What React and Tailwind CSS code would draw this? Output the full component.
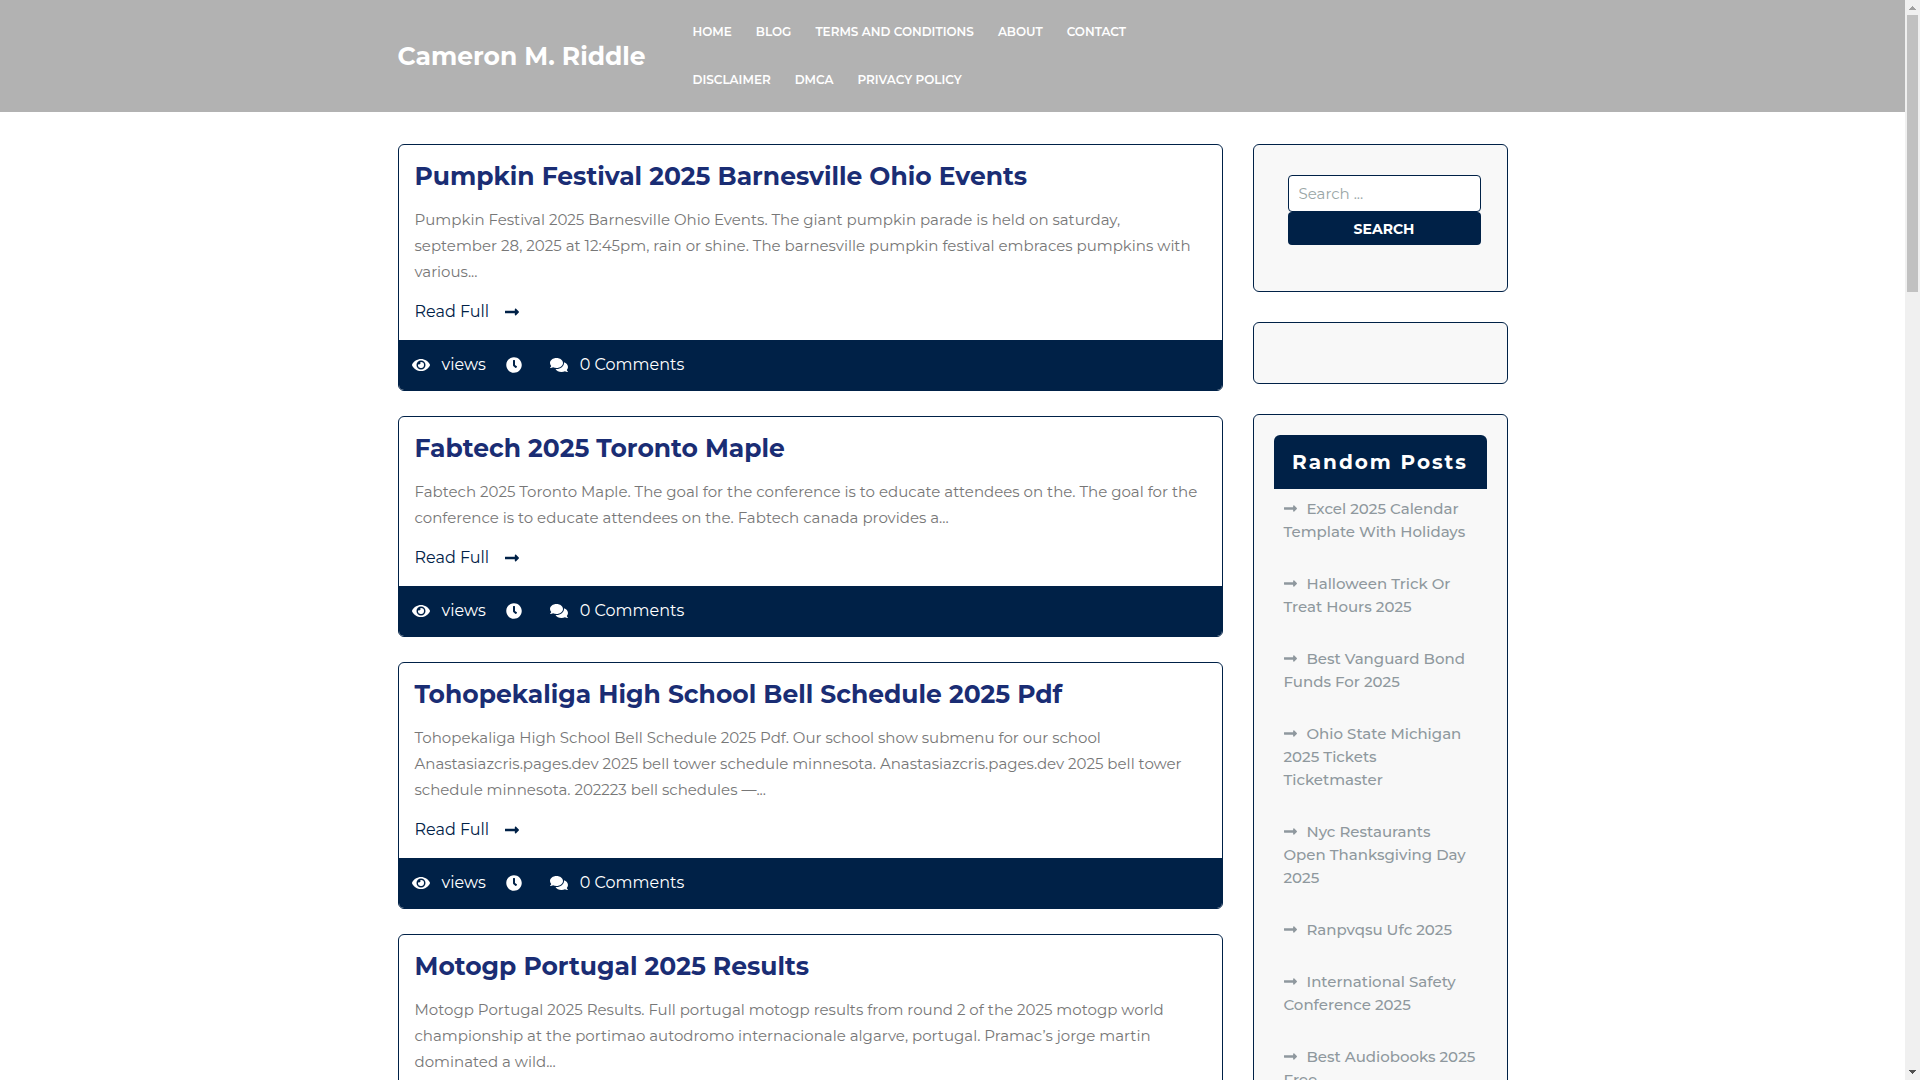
import React from 'react';
import { FaClock, FaComments, FaEye, FaLongArrowAltRight } from 'react-icons/fa';

const navRows = [
    ['Home', 'Blog', 'Terms and Conditions', 'About', 'Contact'],
    ['Disclaimer', 'DMCA', 'Privacy Policy'],
];

const posts = [
    {
        title: 'Pumpkin Festival 2025 Barnesville Ohio Events',
        excerpt: 'Pumpkin Festival 2025 Barnesville Ohio Events. The giant pumpkin parade is held on saturday, september 28, 2025 at 12:45pm, rain or shine. The barnesville pumpkin festival embraces pumpkins with various...',
    },
    {
        title: 'Fabtech 2025 Toronto Maple',
        excerpt: 'Fabtech 2025 Toronto Maple. The goal for the conference is to educate attendees on the. The goal for the conference is to educate attendees on the. Fabtech canada provides a...',
    },
    {
        title: 'Tohopekaliga High School Bell Schedule 2025 Pdf',
        excerpt: 'Tohopekaliga High School Bell Schedule 2025 Pdf. Our school show submenu for our school Anastasiazcris.pages.dev 2025 bell tower schedule minnesota. Anastasiazcris.pages.dev 2025 bell tower schedule minnesota. 202223 bell schedules —...',
    },
    {
        title: 'Motogp Portugal 2025 Results',
        excerpt: 'Motogp Portugal 2025 Results. Full portugal motogp results from round 2 of the 2025 motogp world championship at the portimao autodromo internacionale algarve, portugal. Pramac’s jorge martin dominated a wild...',
    },
];

const randomPosts = [
    'Excel 2025 Calendar Template With Holidays',
    'Halloween Trick Or Treat Hours 2025',
    'Best Vanguard Bond Funds For 2025',
    'Ohio State Michigan 2025 Tickets Ticketmaster',
    'Nyc Restaurants Open Thanksgiving Day 2025',
    'Ranpvqsu Ufc 2025',
    'International Safety Conference 2025',
    'Best Audiobooks 2025 Free',
];

function Header() {
    return (
        <header className="bg-[#b2b2b2] text-white">
            <div className="mx-auto flex h-28 max-w-[1110px] items-center">
                <a href="#" className="w-[295px] text-[25px] font-bold leading-8 whitespace-nowrap">
                    Cameron M. Riddle
                </a>
                <nav className="flex flex-col gap-6">
                    {navRows.map((row) => (
                        <ul key={row[0]} className="flex gap-6">
                            {row.map((label) => (
                                <li key={label}>
                                    <a href="#" className="block text-xs font-semibold uppercase leading-6 whitespace-nowrap">
                                        {label}
                                    </a>
                                </li>
                            ))}
                        </ul>
                    ))}
                </nav>
            </div>
        </header>
    );
}

function PostCard({ post }) {
    return (
        <article className="overflow-hidden rounded-md border border-[#002147] bg-white">
            <div className="px-4 pt-[15px] pb-4">
                <h2 className="text-[25px] font-bold leading-8 text-[#1a2d74]">
                    <a href="#">{post.title}</a>
                </h2>
                <p className="mt-[15px] text-[15px] leading-[26px] text-[#777777]">{post.excerpt}</p>
                <a href="#" className="mt-[15px] flex items-center gap-[15px] text-base leading-6 text-[#002147]">
                    Read Full
                    <FaLongArrowAltRight className="h-4" />
                </a>
            </div>
            <div className="flex h-[50px] items-center bg-[#002147] px-[13px] text-base text-white">
                <span className="flex items-center gap-3">
                    <FaEye className="h-4 w-[18px]" />
                    views
                </span>
                <FaClock className="ml-5 h-4 w-4" />
                <span className="ml-7 flex items-center gap-3">
                    <FaComments className="h-4 w-[18px]" />
                    0 Comments
                </span>
            </div>
        </article>
    );
}

function Widget({ className, children }) {
    return <section className={`rounded-md border border-[#002147] bg-[#f8f8f8] ${className}`}>{children}</section>;
}

function SearchForm() {
    return (
        <form className="flex flex-col" onSubmit={(e) => e.preventDefault()}>
            <input
                type="search"
                aria-label="Search"
                placeholder="Search ..."
                className="h-[37px] w-full rounded border border-[#002147] bg-white px-[10px] text-[15px] placeholder:text-[#9aa6a6]"
            />
            <button type="submit" className="h-[33px] rounded bg-[#002147] text-sm font-bold uppercase text-white">
                Search
            </button>
        </form>
    );
}

function Sidebar() {
    return (
        <aside className="flex w-[255px] shrink-0 flex-col gap-[30px]">
            <Widget className="pt-[30px] pr-[26px] pb-[46px] pl-[34px]">
                <SearchForm />
            </Widget>
            <Widget className="h-[62px]" />
            <Widget className="p-5">
                <h3 className="rounded-t-md bg-[#002147] text-center text-xl font-bold leading-[54px] tracking-[2px] text-white">
                    Random Posts
                </h3>
                <ul className="flex flex-col gap-[29px] px-[10px] pt-2">
                    {randomPosts.map((title) => (
                        <li key={title} className="text-[15px] font-medium leading-[23px] text-[#8f989e]">
                            <a href="#">
                                <FaLongArrowAltRight className="mr-[10px] inline h-[15px] w-[13px] align-[-2px]" />
                                {title}
                            </a>
                        </li>
                    ))}
                </ul>
            </Widget>
        </aside>
    );
}

function ScrollBar() {
    return (
        <div className="flex w-[15px] shrink-0 flex-col items-center bg-[#f0f0f0]" aria-hidden="true">
            <svg className="h-[15px] w-[15px]" viewBox="0 0 15 15" shapeRendering="crispEdges">
                <path d="M4 10h7v-1h-1v-1h-1v-1h-1v-1h-1v1h-1v1h-1v1h-1z" fill="#a0a0a0" />
            </svg>
            <div className="h-[277px] w-[11px] bg-[#c1c1c1]" />
            <svg className="mt-auto h-[15px] w-[15px]" viewBox="0 0 15 15" shapeRendering="crispEdges">
                <path d="M4 5h7v1h-1v1h-1v1h-1v1h-1v-1h-1v-1h-1v-1h-1z" fill="#505050" />
            </svg>
        </div>
    );
}

export default function App() {
    return (
        <div className="flex h-screen overflow-hidden bg-white font-['Montserrat','Inter',sans-serif]">
            <div className="min-w-0 flex-1 overflow-hidden">
                <Header />
                <div className="mx-auto flex max-w-[1110px] items-start gap-[30px] pt-8">
                    <main className="flex min-w-0 flex-1 flex-col gap-[25px]">
                        {posts.map((post) => (
                            <PostCard key={post.title} post={post} />
                        ))}
                    </main>
                    <Sidebar />
                </div>
            </div>
            <ScrollBar />
        </div>
    );
}
